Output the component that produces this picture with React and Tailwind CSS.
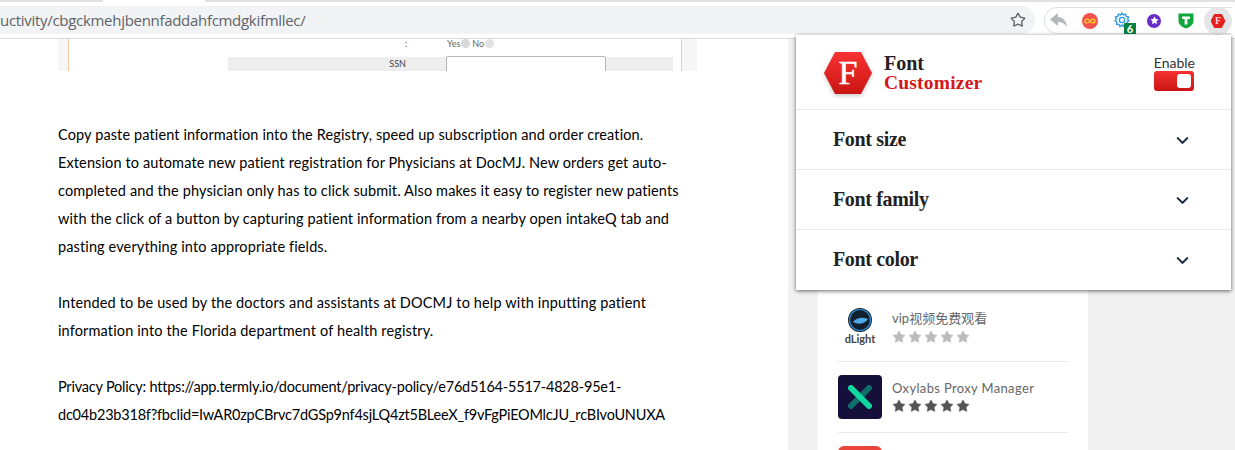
import { ChevronDown, Star } from 'lucide-react';

const bodyFont = 'font-["Lato",sans-serif]';
const headFont = 'font-["Liberation_Serif",serif]';

const paragraphs = [
  {
    tracking: 'tracking-[0.12px]',
    lines: [
      'Copy paste patient information into the Registry, speed up subscription and order creation.',
      'Extension to automate new patient registration for Physicians at DocMJ. New orders get auto-',
      'completed and the physician only has to click submit. Also makes it easy to register new patients',
      'with the click of a button by capturing patient information from a nearby open intakeQ tab and',
      'pasting everything into appropriate fields.',
    ],
  },
  {
    tracking: 'tracking-[0.14px]',
    lines: [
      'Intended to be used by the doctors and assistants at DOCMJ to help with inputting patient',
      'information into the Florida department of health registry.',
    ],
  },
  {
    tracking: 'tracking-[-0.21px]',
    lines: [
      'Privacy Policy: https://app.termly.io/document/privacy-policy/e76d5164-5517-4828-95e1-',
      'dc04b23b318f?fbclid=IwAR0zpCBrvc7dGSp9nf4sjLQ4zt5BLeeX_f9vFgPiEOMlcJU_rcBIvoUNUXA',
    ],
  },
];

const FontLogo = () => (
  <svg width="50" height="44" viewBox="0 0 50 44" className="drop-shadow-[0_2px_2px_rgba(0,0,0,0.2)]">
    <defs>
      <linearGradient id="hex" x1="0" y1="0" x2="0" y2="1">
        <stop offset="0" stopColor="#f83333" />
        <stop offset="1" stopColor="#c91512" />
      </linearGradient>
    </defs>
    <polygon points="12,1 38,1 49,22 38,43 12,43 1,22" fill="url(#hex)" />
  </svg>
);

const Stars = ({ color }) => (
  <div className="flex gap-[2px]">
    {[0, 1, 2, 3, 4].map((i) => (
      <Star key={i} size={14} className={color} fill="currentColor" strokeWidth={1} />
    ))}
  </div>
);

const Toolbar = () => (
  <div className="h-[37px] shrink-0 bg-white border-b border-[#d9d9d9] pt-[4px] flex">
    <div className="flex-1 h-[28px] bg-[#f1f3f4] rounded-r-[14px] flex items-center justify-between pr-[9px] mr-[9px]">
      <span className='text-[15px] text-[#5f6368] font-["Open_Sans",sans-serif] tracking-[-0.3px] whitespace-nowrap'>
        uctivity/cbgckmehjbennfaddahfcmdgkifmllec/
      </span>
      <Star size={16} className="text-[#5f6368]" strokeWidth={2} />
    </div>
    <div className="relative w-[187px] h-[27px] mt-[1px] mr-[4px] border border-r-0 border-[#dfe1e5] rounded-l-[14px] flex items-center">
      <svg width="18" height="15" viewBox="0 0 18 15" className="ml-[5px]">
        <path d="M8 0 L0 6.5 L8 13 V9 C12 9 15 10.5 17 14 C16.5 8 13 4 8 4 Z" fill="#b4b7ba" />
      </svg>
      <svg width="16" height="16" viewBox="0 0 16 16" className="ml-[14px]">
        <circle cx="8" cy="8" r="8" fill="#f4524d" />
        <path d="M8 8 C6.5 5.5 3 5.5 3 8 C3 10.5 6.5 10.5 8 8 C9.5 5.5 13 5.5 13 8 C13 10.5 9.5 10.5 8 8 Z" fill="none" stroke="#ffd12e" strokeWidth="1.4" />
      </svg>
      <svg width="16" height="16" viewBox="0 0 16 16" className="ml-[16px] -mt-[2px]" fill="none" stroke="#2f9be8" strokeWidth="1.4">
        <circle cx="8" cy="8" r="2.6" />
        <path d="M8 1.2 L9.4 3 L11.6 2.2 L12.2 4.4 L14.6 5 L13.6 7.1 L15 8.8 L13 10 L13 12.4 L10.7 12.3 L9.4 14.4 L8 13 L6 14.6 L5 12.4 L2.7 12.4 L2.9 10 L1 8.8 L2.4 7 L1.5 5 L3.8 4.4 L4.4 2.2 L6.6 3 Z" />
      </svg>
      <span className={`absolute left-[79px] top-[15px] w-[12px] h-[11px] bg-[#0b8043] text-white text-[11px] leading-[11px] text-center font-bold ${bodyFont}`}>
        6
      </span>
      <span className="ml-[17px] w-[14px] h-[14px] rounded-full bg-[#6a2fc9] flex items-center justify-center">
        <Star size={9} className="text-white" fill="currentColor" strokeWidth={0} />
      </span>
      <svg width="16" height="17" viewBox="0 0 16 17" className="ml-[17px]">
        <path d="M0.5 1.5 H15.5 V9 C15.5 13 11 15.5 8 16.5 C5 15.5 0.5 13 0.5 9 Z" fill="#10a83d" />
        <path d="M4 4.5 H12 V7 H9.4 V12.5 H6.6 V7 H4 Z" fill="#fff" />
      </svg>
      <span className="absolute right-[-1px] top-[-1px] w-[28px] h-[28px] rounded-full bg-[#e4e5e7] flex items-center justify-center">
        <span className={`w-[15px] h-[14px] bg-[#e3201c] text-[#fbd6d5] text-[10px] leading-[14px] font-bold text-center [clip-path:polygon(25%_0,75%_0,100%_50%,75%_100%,25%_100%,0_50%)] ${headFont}`}>
          F
        </span>
      </span>
    </div>
  </div>
);

const FontRow = ({ label }) => (
  <div className="h-[60px] border-t border-[#eaeaea] pl-[37px] pr-[39px] flex items-center justify-between">
    <span className={`text-[20px] font-bold text-[#222] tracking-[-0.35px] -mt-[2px] ${headFont}`}>{label}</span>
    <ChevronDown size={19} className="text-[#16263d] mt-[2px]" strokeWidth={2.6} />
  </div>
);

const Popup = () => (
  <div className="absolute left-[796px] top-[35px] w-[435px] h-[255px] bg-white shadow-[0_1px_4px_rgba(0,0,0,0.6)] z-10">
    <div className="h-[75px] flex items-center pl-[27px] pr-[36px]">
      <div className="relative">
        <FontLogo />
        <span className={`absolute inset-0 flex items-center justify-center text-white text-[34px] leading-none [-webkit-text-stroke:0.5px_white] ${headFont}`}>
          F
        </span>
      </div>
      <div className={`ml-[11px] font-bold ${headFont} leading-[19px]`}>
        <div className="text-[20px] text-[#222]">Font</div>
        <div className="text-[19.5px] text-[#d3181a] tracking-[0.2px]">Customizer</div>
      </div>
      <div className="ml-auto flex flex-col items-start">
        <span className={`text-[14px] leading-[16px] text-[#333] ${bodyFont}`}>Enable</span>
        <div className="w-[40px] h-[20px] rounded-[3px] bg-gradient-to-b from-[#f63130] to-[#c81413] flex justify-end items-center pr-[3px]">
          <span className="w-[14px] h-[14px] rounded-[3px] bg-white" />
        </div>
      </div>
    </div>
    <div className="-mt-px">
      <FontRow label="Font size" />
      <FontRow label="Font family" />
      <FontRow label="Font color" />
    </div>
  </div>
);

const ScreenshotCrop = () => (
  <div className="ml-[58px] w-[639px] h-[32px] flex bg-white overflow-hidden">
    <div className="w-[10px] shrink-0 bg-[#f6f6f6]" />
    <div className="relative flex-1 border-l border-r border-[#f3c9a0]">
      <span className={`absolute left-[336px] top-[0px] text-[9px] leading-[9px] text-[#555] ${bodyFont}`}>:</span>
      <div className={`absolute left-[378px] top-[0px] flex items-center gap-[1px] text-[9px] leading-[9px] text-[#666] ${bodyFont}`}>
        <span>Yes</span>
        <span className="w-[9px] h-[9px] rounded-full bg-[#d8d8d8]" />
        <span className="ml-[1px]">No</span>
        <span className="w-[9px] h-[9px] rounded-full bg-[#e2e2e2]" />
      </div>
      <div className="absolute left-[159px] right-[8px] top-[18px] h-[14px] bg-[#eeeeee] flex">
        <span className={`w-[178px] text-right text-[9px] leading-[14px] text-[#444] ${bodyFont}`}>SSN</span>
        <span className="ml-[40px] -mt-px w-[160px] h-[20px] bg-white border border-[#b5b5b5] rounded-[2px]" />
      </div>
    </div>
    <div className="w-[15px] shrink-0 bg-[#f6f6f6]" />
  </div>
);

const Description = () => (
  <div className={`mt-[50px] ml-[58px] text-[14.5px] leading-[28px] text-black whitespace-nowrap ${bodyFont}`}>
    {paragraphs.map((para, i) => (
      <p key={i} className={`mb-[28px] ${para.tracking}`}>
        {para.lines.map((line) => (
          <span key={line} className="block">{line}</span>
        ))}
      </p>
    ))}
  </div>
);

const Sidebar = () => (
  <div className="w-[270px] ml-[30px] bg-white px-[20px] h-full pt-[269px] overflow-hidden">
    <div className="h-[54px] flex border-b border-[#eaeaea]">
      <div className="w-[44px] flex flex-col items-center">
        <svg width="24" height="24" viewBox="0 0 24 24">
          <circle cx="12" cy="12" r="12" fill="#12202e" />
          <circle cx="12" cy="12" r="10.5" fill="none" stroke="#2f8fd8" strokeWidth="1.2" />
          <path d="M5 14 C9 9 15 9 20 11 C17 16 10 17 5 14 Z" fill="#4fa9e8" />
        </svg>
        <span className={`text-[11px] leading-[14px] font-bold text-[#444] ${bodyFont}`}>dLight</span>
      </div>
      <div className="ml-[10px]">
        <div className={`text-[13px] leading-[20px] text-[#666] ${bodyFont}`}>
          vip<span className='font-["Noto_Sans_CJK_SC",sans-serif]'>视频免费观看</span>
        </div>
        <div className="mt-[2px]">
          <Stars color="text-[#bbbbbb]" />
        </div>
      </div>
    </div>
    <div className="h-[71px] flex items-center border-b border-[#eaeaea]">
      <div className="w-[44px] h-[44px] rounded-[4px] bg-[#15103a] flex items-center justify-center">
        <svg width="24" height="24" viewBox="0 0 24 24">
          <path d="M3 21 L21 3" stroke="#0f6f68" strokeWidth="6" strokeLinecap="round" />
          <path d="M3 3 L21 21" stroke="#0fd9a0" strokeWidth="6" strokeLinecap="round" />
        </svg>
      </div>
      <div className="ml-[10px] pb-[4px]">
        <div className={`text-[13px] leading-[20px] text-[#666] tracking-[0.35px] ${bodyFont}`}>Oxylabs Proxy Manager</div>
        <div className="mt-[1px]">
          <Stars color="text-[#555555]" />
        </div>
      </div>
    </div>
    <div className="mt-[13px] w-[44px] h-[44px] rounded-[6px] bg-[#e8443c]" />
  </div>
);

export default function App() {
  return (
    <div className="relative w-[1235px] h-[450px] overflow-hidden bg-white flex flex-col">
      <div className="h-[2px] shrink-0 flex bg-[#dee1e6]">
        <div className="ml-[103px] w-[102px] bg-white" />
      </div>
      <Toolbar />
      <div className="flex flex-1 min-h-0">
        <div className="w-[788px] shrink-0 overflow-hidden">
          <ScreenshotCrop />
          <Description />
        </div>
        <div className="flex-1 min-h-0 bg-[#f1f1f1]">
          <Sidebar />
        </div>
      </div>
      <Popup />
    </div>
  );
}
